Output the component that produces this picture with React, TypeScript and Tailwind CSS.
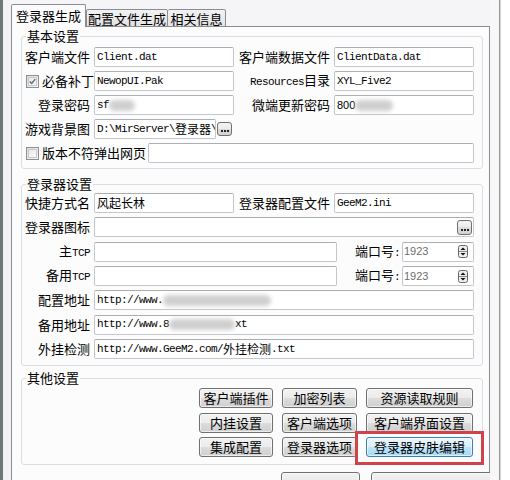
import React from "react";

const MONO = "font-['Liberation_Mono','Noto_Sans_CJK_SC',monospace] text-[11px] tracking-[-0.6px]";
const CJK = "font-['Noto_Sans_CJK_SC',sans-serif] text-[12px] tracking-normal";

function Field({ w, children, className = "" }: { w: string; children?: React.ReactNode; className?: string }) {
  return (
    <div
      className={`${w} h-[20px] shrink-0 flex items-center pl-[2px] bg-white border border-[#c3c6cc] border-t-[#abadb3] rounded-[2px] overflow-hidden whitespace-nowrap ${MONO} ${className}`}
    >
      {children}
    </div>
  );
}

function Label({ w = "w-[72px]", children }: { w?: string; children: React.ReactNode }) {
  return <div className={`${w} shrink-0 text-right pr-[4px] leading-[20px] whitespace-nowrap`}>{children}</div>;
}

function Lat({ children }: { children: React.ReactNode }) {
  return <span className={MONO}>{children}</span>;
}

function Blur({ w }: { w: string }) {
  return <span className={`inline-block ${w} h-[11px] rounded-full bg-[#cfcfcf] blur-[2px]`} />;
}

function Dots({ className = "" }: { className?: string }) {
  return (
    <div
      className={`w-[15px] h-[14px] shrink-0 rounded-[3px] border border-[#707070] bg-[linear-gradient(#f4f4f4_0%,#ebebeb_50%,#dddddd_50%,#d2d2d2_100%)] flex items-end justify-center pb-[3px] gap-[1px] ${className}`}
    >
      <span className="w-[2px] h-[2px] bg-[#222]" />
      <span className="w-[2px] h-[2px] bg-[#222]" />
      <span className="w-[2px] h-[2px] bg-[#222]" />
    </div>
  );
}

function Check({ checked }: { checked?: boolean }) {
  return (
    <div className="w-[13px] h-[13px] shrink-0 border border-[#8e8f8f] bg-[linear-gradient(135deg,#dcdcdc,#f7f7f7)] p-[1px]">
      <div className="w-full h-full border border-[#c8c8c8] bg-[linear-gradient(135deg,#e6e6e6,#fbfbfb)] flex items-center justify-center">
        {checked && (
          <svg width="9" height="9" viewBox="0 0 9 9">
            <path d="M1 4.5 L3.5 7 L8 1.5" fill="none" stroke="#5a6a80" strokeWidth="1.8" />
          </svg>
        )}
      </div>
    </div>
  );
}

function Btn({ w, children, hot }: { w: string; children?: React.ReactNode; hot?: boolean }) {
  const base = hot
    ? "border-[#3c7fb1] bg-[linear-gradient(#eaf6fd_0%,#d9f0fc_50%,#bee6fd_50%,#a7d9f5_100%)]"
    : "border-[#707070] bg-[linear-gradient(#f2f2f2_0%,#ebebeb_50%,#dddddd_50%,#cfcfcf_100%)]";
  return (
    <div
      className={`${w} h-[20px] shrink-0 rounded-[3px] border ${base} shadow-[inset_0_0_0_1px_rgba(255,255,255,0.6)] text-[13px] leading-[18px] text-center whitespace-nowrap`}
    >
      {children}
    </div>
  );
}

function Spin() {
  return (
    <div className="w-[72px] h-[20px] shrink-0 flex items-center justify-between bg-white border border-[#c3c6cc] border-t-[#abadb3] rounded-[2px] pl-[1px] pr-[5px]">
      <span className="font-['Liberation_Sans',sans-serif] text-[11px] text-[#6d6d6d]">1923</span>
      <svg width="10" height="13" viewBox="0 0 10 13">
        <rect x="0.5" y="0.5" width="9" height="12" rx="2" fill="#eeeeee" stroke="#666" />
        <line x1="1" y1="6.5" x2="9" y2="6.5" stroke="#888" />
        <path d="M2.5 5 L5 2.5 L7.5 5 Z" fill="#111" />
        <path d="M2.5 8 L5 10.5 L7.5 8 Z" fill="#111" />
      </svg>
    </div>
  );
}

export default function App() {
  return (
    <div className="w-[510px] h-[480px] overflow-hidden flex bg-[#f5f4f6] font-['Noto_Sans_CJK_SC',sans-serif] text-[13px] text-black">
      <div className="w-[3px] shrink-0 bg-[#6f7778]" />
      <div className="w-[8px] shrink-0 bg-[#f3f3f3]" />
      <div className="w-[479px] shrink-0 flex flex-col">
        {/* tabs */}
        <div className="h-[27px] shrink-0 flex items-end relative z-10 -mb-px">
          <div className="w-[75px] h-[23px] border border-b-0 border-[#898c95] rounded-t-[2px] bg-[#fcfcfc] text-center leading-[21px]">
            登录器生成
          </div>
          <div className="w-[82px] h-[18px] border border-[#898c95] rounded-t-[2px] bg-[linear-gradient(#f2f2f2,#e3e3e3)] text-center leading-[18px]">
            配置文件生成
          </div>
          <div className="w-[58px] h-[18px] border border-l-0 border-[#898c95] rounded-t-[2px] bg-[linear-gradient(#f2f2f2,#e3e3e3)] text-center leading-[18px]">
            相关信息
          </div>
        </div>
        {/* panel */}
        <div className="flex-1 border-l border-r border-t border-[#898c95] bg-[#fcfcfc] pl-[9px] pt-[2px] flex flex-col">
          {/* group 1 */}
          <fieldset className="w-[462px] border border-[#d5dfe5] rounded-[3px] pt-[4px] pb-[5px]">
            <legend className="ml-[4px] px-[1px] leading-[14px]">基本设置</legend>
            <div className="flex flex-col gap-[4px]">
              <div className="flex items-center h-[20px]">
                <Label>客户端文件</Label>
                <Field w="w-[140px]">Client.dat</Field>
                <Label w="w-[100px]">客户端数据文件</Label>
                <Field w="w-[140px]">ClientData.dat</Field>
              </div>
              <div className="flex items-center h-[20px]">
                <div className="w-[72px] shrink-0 flex items-center pl-[4px] gap-[3px] leading-[20px]">
                  <Check checked />
                  <span>必备补丁</span>
                </div>
                <Field w="w-[140px]">NewopUI.Pak</Field>
                <Label w="w-[100px]">
                  <Lat>Resources</Lat>目录
                </Label>
                <Field w="w-[140px]">XYL_Five2</Field>
              </div>
              <div className="flex items-center h-[20px]">
                <Label>登录密码</Label>
                <Field w="w-[140px]">
                  sf<Blur w="w-[26px]" />
                </Field>
                <Label w="w-[100px]">微端更新密码</Label>
                <Field w="w-[140px]">
                  <span className="font-['Liberation_Sans',sans-serif] text-[11px] tracking-normal">800</span>
                  <Blur w="w-[38px]" />
                </Field>
              </div>
              <div className="flex items-center h-[20px]">
                <Label>游戏背景图</Label>
                <Field w="w-[122px]">
                  D:\MirServer\<span className={CJK}>登录器</span>\
                </Field>
                <Dots className="ml-[1px]" />
              </div>
              <div className="flex items-center h-[20px]">
                <div className="w-[126px] shrink-0 flex items-center pl-[4px] gap-[3px] leading-[20px] whitespace-nowrap">
                  <Check />
                  <span>版本不符弹出网页</span>
                </div>
                <Field w="w-[326px]" />
              </div>
            </div>
          </fieldset>

          {/* group 2 */}
          <fieldset className="w-[462px] mt-[8px] border border-[#d5dfe5] rounded-[3px] pt-[2px] pb-[6px]">
            <legend className="ml-[4px] px-[1px] leading-[14px]">登录器设置</legend>
            <div className="flex flex-col gap-[4.35px]">
              <div className="flex items-center h-[20px]">
                <Label>快捷方式名</Label>
                <Field w="w-[140px]">
                  <span className={CJK}>风起长林</span>
                </Field>
                <Label w="w-[100px]">登录器配置文件</Label>
                <Field w="w-[140px]">GeeM2.ini</Field>
              </div>
              <div className="flex items-center h-[20px]">
                <Label>登录器图标</Label>
                <Field w="w-[380px]" className="justify-end pr-[1px]">
                  <Dots className="h-[15px]" />
                </Field>
              </div>
              <div className="flex items-center h-[20px]">
                <Label>
                  主<Lat>TCP</Lat>
                </Label>
                <Field w="w-[243px]" />
                <div className="w-[65px] shrink-0 pl-[18px] leading-[20px] whitespace-nowrap">
                  端口号<Lat>:</Lat>
                </div>
                <Spin />
              </div>
              <div className="flex items-center h-[20px]">
                <Label>
                  备用<Lat>TCP</Lat>
                </Label>
                <Field w="w-[243px]" />
                <div className="w-[65px] shrink-0 pl-[18px] leading-[20px] whitespace-nowrap">
                  端口号<Lat>:</Lat>
                </div>
                <Spin />
              </div>
              <div className="flex items-center h-[20px]">
                <Label>配置地址</Label>
                <Field w="w-[380px]">
                  http://www.<Blur w="w-[108px]" />
                </Field>
              </div>
              <div className="flex items-center h-[20px]">
                <Label>备用地址</Label>
                <Field w="w-[380px]">
                  http://www.8<Blur w="w-[66px]" />xt
                </Field>
              </div>
              <div className="flex items-center h-[20px]">
                <Label>外挂检测</Label>
                <Field w="w-[380px]">
                  http://www.GeeM2.com/<span className={CJK}>外挂检测</span>.txt
                </Field>
              </div>
            </div>
          </fieldset>

          {/* group 3 */}
          <fieldset className="w-[462px] mt-[5px] border border-[#d5dfe5] rounded-[3px] pt-[3px] pb-[7px]">
            <legend className="ml-[4px] px-[1px] leading-[14px]">其他设置</legend>
            <div className="flex flex-col gap-[4.5px] pl-[177px]">
              <div className="flex gap-[9px]">
                <Btn w="w-[74px]">客户端插件</Btn>
                <Btn w="w-[75px]">加密列表</Btn>
                <Btn w="w-[107px]">资源读取规则</Btn>
              </div>
              <div className="flex gap-[9px]">
                <Btn w="w-[74px]">内挂设置</Btn>
                <Btn w="w-[75px]">客户端选项</Btn>
                <Btn w="w-[107px]">客户端界面设置</Btn>
              </div>
              <div className="flex gap-[9px]">
                <Btn w="w-[74px]">集成配置</Btn>
                <Btn w="w-[75px]">登录器选项</Btn>
                <div className="relative">
                  <Btn w="w-[107px]" hot>
                    登录器皮肤编辑
                  </Btn>
                  <span className="absolute -left-[11px] -right-[11px] -top-[6px] -bottom-[8px] border-[3px] border-[#d1434a]" />
                </div>
              </div>
            </div>
          </fieldset>

          <div className="mt-[7px] pl-[260px] flex gap-[11px]">
            <Btn w="w-[79px]" />
            <Btn w="w-[122px]" />
          </div>
        </div>
      </div>
      <div className="w-[9px] shrink-0 bg-[#f7f7f7]" />
      <div className="w-[1px] shrink-0 bg-[#9a9a9a]" />
      <div className="w-[1px] shrink-0 bg-[#d4d4d4]" />
      <div className="flex-1 bg-white" />
    </div>
  );
}
